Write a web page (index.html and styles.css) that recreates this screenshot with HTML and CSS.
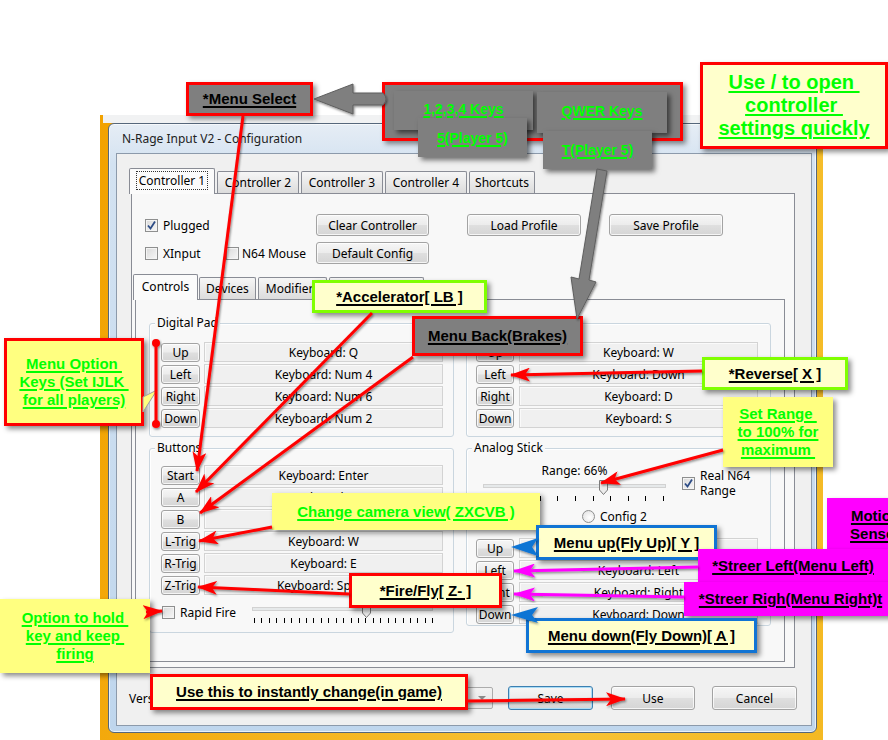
FILE: index.html
```html
<!DOCTYPE html>
<html lang="en">
<head>
    <meta charset="UTF-8">
    <title>N-Rage Input V2 - Configuration</title>
    <link rel="stylesheet" href="styles.css">
</head>
<body>
<div class="desk">
    <div class="win">
        <div class="caption">N-Rage Input V2 - Configuration</div>
        <div class="client">
            <div class="tabs">
                <div class="tab on"><span class="focus">Controller 1</span></div>
                <div class="tab">Controller 2</div>
                <div class="tab">Controller 3</div>
                <div class="tab">Controller 4</div>
                <div class="tab w-short">Shortcuts</div>
            </div>
            <div class="panel">
                <div class="top">
                    <div class="checks">
                        <div class="chk-row"><span class="cb"><svg width="11" height="11" viewBox="0 0 11 11"><path d="M2 5.5L4.5 8.5L9 1.5" fill="none" stroke="#2d4c86" stroke-width="1.8"/></svg></span>Plugged</div>
                        <div class="chk-row"><span class="cb"></span><span class="xi">XInput</span><span class="cb cb-m"></span>N64 Mouse</div>
                    </div>
                    <div class="btncol">
                        <div class="btn">Clear Controller</div>
                        <div class="btn">Default Config</div>
                    </div>
                    <div class="btn load">Load Profile</div>
                    <div class="btn savep">Save Profile</div>
                </div>
                <div class="tabs2">
                    <div class="tab on t-ctl">Controls</div>
                    <div class="tab t-dev">Devices</div>
                    <div class="tab t-mod">Modifiers</div>
                    <div class="tab t-pak">Controller Pak</div>
                </div>
                <div class="panel2">
                    <div class="cols">
                        <div class="col">
                            <div class="group g-pad">
                                <div class="legend">Digital Pad</div>
                                <div class="rows">
                                    <div class="row"><div class="btn">Up</div><div class="key">Keyboard: Q</div></div>
                                    <div class="row"><div class="btn">Left</div><div class="key">Keyboard: Num 4</div></div>
                                    <div class="row"><div class="btn">Right</div><div class="key">Keyboard: Num 6</div></div>
                                    <div class="row"><div class="btn">Down</div><div class="key">Keyboard: Num 2</div></div>
                                </div>
                            </div>
                            <div class="group g-btn">
                                <div class="legend">Buttons</div>
                                <div class="rows">
                                    <div class="row"><div class="btn">Start</div><div class="key">Keyboard: Enter</div></div>
                                    <div class="row"><div class="btn">A</div><div class="key">Keyboard: X</div></div>
                                    <div class="row"><div class="btn">B</div><div class="key">Keyboard: C</div></div>
                                    <div class="row"><div class="btn">L-Trig</div><div class="key">Keyboard: W</div></div>
                                    <div class="row"><div class="btn">R-Trig</div><div class="key">Keyboard: E</div></div>
                                    <div class="row"><div class="btn">Z-Trig</div><div class="key">Keyboard: Space</div></div>
                                </div>
                                <div class="rapid">
                                    <span class="cb"></span><span class="rapid-lbl">Rapid Fire</span>
                                    <div class="slider">
                                        <div class="trk"><svg class="thumb th-rapid" width="9" height="15" viewBox="0 0 9 15"><path d="M.5 .5H8.5V10L4.5 14.5L.5 10Z" fill="#ececec" stroke="#7b7b7b"/></svg></div>
                                        <div class="ticks t-rapid"></div>
                                    </div>
                                </div>
                            </div>
                        </div>
                        <div class="col">
                            <div class="group g-pad">
                                <div class="legend">C Buttons</div>
                                <div class="rows r">
                                    <div class="row"><div class="btn">Up</div><div class="key">Keyboard: W</div></div>
                                    <div class="row"><div class="btn">Left</div><div class="key">Keyboard: Down</div></div>
                                    <div class="row"><div class="btn">Right</div><div class="key">Keyboard: D</div></div>
                                    <div class="row"><div class="btn">Down</div><div class="key">Keyboard: S</div></div>
                                </div>
                            </div>
                            <div class="group g-ana">
                                <div class="legend">Analog Stick</div>
                                <div class="ana">
                                    <div class="rangebox">
                                        <div class="rlbl">Range: 66%</div>
                                        <div class="trk trk2"><svg class="thumb th-range" width="9" height="15" viewBox="0 0 9 15"><path d="M.5 .5H8.5V10L4.5 14.5L.5 10Z" fill="#ececec" stroke="#7b7b7b"/></svg></div>
                                        <div class="ticks t-range"></div>
                                    </div>
                                    <div class="real">
                                        <span class="cb"><svg width="11" height="11" viewBox="0 0 11 11"><path d="M2 5.5L4.5 8.5L9 1.5" fill="none" stroke="#2d4c86" stroke-width="1.8"/></svg></span>
                                        <span class="real-lbl">Real N64<br>Range</span>
                                    </div>
                                </div>
                                <div class="radios">
                                    <div class="radio r1"><span class="rb"></span>Config 1</div>
                                    <div class="radio"><span class="rb"></span>Config 2</div>
                                </div>
                                <div class="rows r ana-rows">
                                    <div class="row"><div class="btn">Up</div><div class="key">Keyboard: Up</div></div>
                                    <div class="row"><div class="btn">Left</div><div class="key">Keyboard: Left</div></div>
                                    <div class="row"><div class="btn">Right</div><div class="key">Keyboard: Right</div></div>
                                    <div class="row"><div class="btn">Down</div><div class="key">Keyboard: Down</div></div>
                                </div>
                            </div>
                        </div>
                    </div>
                </div>
            </div>
            <div class="bottom">
                <div class="ver">Version:</div>
                <div class="combo"><span>1.83</span><span class="arrow"></span></div>
                <div class="btn save">Save</div>
                <div class="btn use">Use</div>
                <div class="btn cancel">Cancel</div>
            </div>
        </div>
    </div>
</div>

<!-- annotations -->
<div class="note gray n-select"><u>*Menu Select</u></div>
<div class="note gray n-keys"></div>
<div class="note gray sm n-k1"><u>1,2,3,4 Keys</u></div>
<div class="note gray sm n-k5"><u>5(Player 5)</u></div>
<div class="note gray sm n-kq"><u>QWER Keys</u></div>
<div class="note gray sm n-kt"><u>T(Player 5)</u></div>
<div class="note pale red-b big n-open"><u>Use / to open&nbsp;<br>controller&nbsp;<br>settings quickly</u></div>
<div class="note pale green-b n-accel"><u>*Accelerator[ LB ]</u></div>
<div class="note gray n-back"><u>Menu Back(Brakes)</u></div>
<div class="note pale green-b n-rev"><u>*Reverse[ X ]</u></div>
<div class="note yel red-b grn n-opt"><u>Menu Option&nbsp;<br>Keys (Set IJLK&nbsp;<br>for all players)</u></div>
<div class="note yel grn n-range"><u>Set Range&nbsp;<br>to 100% for<br>maximum&nbsp;</u></div>
<div class="note yel grn n-cam"><u>Change camera view( ZXCVB )</u></div>
<div class="note pale red-b n-fire"><u>*Fire/Fly[ Z- ]</u></div>
<div class="note yel grn n-hold"><u>Option to hold&nbsp;<br>key and keep&nbsp;<br>firing</u></div>
<div class="note pale red-b n-use"><u>Use this to instantly change(in game)</u></div>
<div class="note pale blue-b n-up"><u>Menu up(Fly Up)[ Y ]</u></div>
<div class="note mag n-mot"><u>Motion<br>Sensor</u></div>
<div class="note mag n-sl"><u>*Streer Left(Menu Left)</u></div>
<div class="note mag n-sr"><u>*Streer Righ(Menu Right)t</u></div>
<div class="note pale blue-b n-down"><u>Menu down(Fly Down)[ A ]</u></div>

<svg class="marks" width="888" height="740" viewBox="0 0 888 740">
    <defs>
        <filter id="sh" x="-20%" y="-20%" width="140%" height="140%"><feDropShadow dx="1" dy="1.5" stdDeviation="1" flood-opacity=".45"/></filter>
        <marker id="hr" viewBox="0 0 20 14" refX="19" refY="7" markerWidth="20" markerHeight="14" markerUnits="userSpaceOnUse" orient="auto"><path d="M0 0L20 7L0 14L5 7z" fill="#f00"/></marker>
        <marker id="hm" viewBox="0 0 22 14" refX="21" refY="7" markerWidth="22" markerHeight="14" markerUnits="userSpaceOnUse" orient="auto"><path d="M0 0L22 7L0 14L5 7z" fill="#f0f"/></marker>
    </defs>
    <g filter="url(#sh)">
        <path class="garrow" d="M314 99L353 84V93H383Q389 99 383 105H353V114Z"/>
        <path class="garrow" d="M597 169L607 171L589 280L596 282L577 319L571 277L579 279Z"/>
    </g>
    <g class="red" filter="url(#sh)">
        <line x1="243" y1="116" x2="197" y2="471"/>
        <line x1="372" y1="313" x2="196" y2="492"/>
        <line x1="413" y1="357" x2="200" y2="513"/>
        <line x1="272" y1="527" x2="199" y2="541"/>
        <line x1="349" y1="594" x2="198" y2="587"/>
        <line x1="702" y1="371" x2="511" y2="375"/>
        <line x1="723" y1="450" x2="601" y2="483"/>
        <line x1="146" y1="612" x2="162" y2="611"/>
        <line x1="467" y1="701" x2="625" y2="699"/>
    </g>
    <polygon class="tail" points="143,397 157,390 143,412"/>
    <g class="brk" filter="url(#sh)">
        <line x1="156" y1="343" x2="156" y2="424"/>
        <circle cx="156" cy="343" r="4"/>
        <circle cx="156" cy="424" r="4"/>
    </g>
    <g class="mg" filter="url(#sh)">
        <line x1="698" y1="567" x2="514" y2="571"/>
        <line x1="684" y1="597" x2="514" y2="594"/>
    </g>
    <g class="bl" filter="url(#sh)">
        <polygon points="511,547 538,538 532,547 538,556"/>
        <polygon points="511,615 538,607 532,615 538,623"/>
    </g>
</svg>
</body>
</html>
```

FILE: styles.css
```css
*{
    box-sizing: border-box;
}
body{
    margin: 0;
    width: 888px;
    height: 740px;
    overflow: hidden;
    position: relative;
    background: #fff;
    font-family: "Noto Sans", "Open Sans", sans-serif;
    font-size: 12px;
    color: #000;
}
.desk{
    margin: 115px 0 0 100px;
    width: 723px;
    height: 625px;
    padding: 8px 6px 7px 8px;
    background:
        linear-gradient(#f1f2f3, #f1f2f3) 3px 0 / 720px 8px no-repeat,
        linear-gradient(100deg, #f2a200, #f5b41e 35%, #f7c234 70%, #f4b923);
}
.win{
    width: 709px;
    height: 610px;
    border: 1px solid #56677b;
    border-radius: 6px;
    background: linear-gradient(#e6edf5, #d3e2f1 40px, #bfd6ed);
    box-shadow: inset 0 0 0 1px rgba(255,255,255,.65);
}
.caption{
    height: 29px;
    line-height: 29px;
    padding-left: 13px;
    color: #222;
    white-space: nowrap;
}
.client{
    margin-left: 7px;
    width: 696px;
    height: 573px;
    border: 1px solid #8c9aab;
    background: #f0f0f0;
    padding: 14px 0 0 12px;
}

/* tabs */
.tabs, .tabs2{
    display: flex;
    align-items: flex-end;
    height: 25px;
}
.tab{
    width: 82px;
    height: 22px;
    margin-right: 2px;
    border: 1px solid #898c95;
    border-bottom: 0;
    border-radius: 2px 2px 0 0;
    background: linear-gradient(#f6f6f6, #e9e9e9 50%, #dcdcdc);
    text-align: center;
    line-height: 21px;
    white-space: nowrap;
    overflow: hidden;
}
.tab.on{
    width: 86px;
    height: 26px;
    margin-bottom: -1px;
    line-height: 24px;
    background: #fbfbfb;
    position: relative;
    z-index: 1;
}
.focus{
    outline: 1px dotted #333;
    padding: 0 2px;
}
.w-short{
    width: 66px;
}
.panel{
    margin-left: 2px;
    width: 664px;
    height: 475px;
    border: 1px solid #898c95;
    background: #f8f8f8;
    padding-top: 20px;
}
.top{
    display: flex;
    height: 50px;
    padding-left: 13px;
}
.checks{
    width: 171px;
}
.chk-row{
    display: flex;
    align-items: center;
    height: 22px;
}
.chk-row + .chk-row{
    margin-top: 6px;
}
.cb{
    flex: none;
    width: 13px;
    height: 13px;
    margin-right: 5px;
    border: 1px solid #8e8f8f;
    background: linear-gradient(135deg, #d9d9d9, #f7f7f7);
    box-shadow: inset 0 0 0 1px #f4f4f4;
    display: flex;
    align-items: center;
    justify-content: center;
}
.xi{
    width: 63px;
}
.cb-m{
    margin-right: 3px;
}
.btn{
    height: 22px;
    border: 1px solid #a3a3a3;
    border-radius: 3px;
    background: linear-gradient(#f6f6f6, #ececec 48%, #dfdfdf 52%, #d5d5d5);
    box-shadow: inset 0 0 0 1px rgba(255,255,255,.75);
    display: flex;
    align-items: center;
    justify-content: center;
    white-space: nowrap;
    overflow: hidden;
}
.btncol{
    width: 113px;
    display: flex;
    flex-direction: column;
    gap: 6px;
}
.load{
    width: 114px;
    margin-left: 38px;
}
.savep{
    width: 114px;
    margin-left: 28px;
}
.tabs2{
    margin: 10px 0 0 1px;
}
.tabs2 .tab.on{
    width: 65px;
}
.t-ctl{
    margin-right: 1px !important;
}
.t-dev{
    width: 57px;
}
.t-mod{
    width: 69px;
}
.t-pak{
    width: 95px;
}
.panel2{
    margin-left: 3px;
    width: 650px;
    height: 363px;
    border: 1px solid #898c95;
    background: #f8f8f8;
}
.cols{
    display: flex;
    gap: 12px;
    padding: 23px 0 0 13px;
}
.col{
    width: 305px;
    display: flex;
    flex-direction: column;
    gap: 11px;
}
.group{
    border: 1px solid #cad6df;
    border-radius: 3px;
    box-shadow: inset 1px 1px 0 #fff;
}
.g-pad{
    height: 114px;
}
.g-btn{
    height: 185px;
}
.g-ana{
    height: 178px;
}
.legend{
    width: fit-content;
    height: 16px;
    line-height: 16px;
    margin: -9px 0 0 5px;
    padding: 0 2px;
    background: #f8f8f8;
}
.rows{
    margin-top: 10px;
    padding-left: 11px;
}
.g-btn .rows{
    margin-top: 8px;
}
.row{
    display: flex;
    align-items: center;
    height: 22px;
}
.row .btn{
    width: 39px;
    height: 19px;
    margin-right: 4px;
}
.rows.r{
    padding-left: 9px;
}
.rows.r .btn{
    width: 38px;
    margin-right: 5px;
}
.key{
    width: 239px;
    height: 20px;
    border: 1px solid #d3d3d3;
    background: #f0f0f0;
    box-shadow: inset 1px 1px 0 #fafafa;
    display: flex;
    align-items: center;
    justify-content: center;
    white-space: nowrap;
    overflow: hidden;
}

/* sliders */
.rapid{
    display: flex;
    align-items: center;
    height: 22px;
    margin-top: 5px;
    padding-left: 12px;
}
.rapid-lbl{
    width: 72px;
}
.slider{
    width: 181px;
    display: flex;
    flex-direction: column;
}
.trk{
    height: 4px;
    margin-top: 6px;
    border: 1px solid #d2d2d2;
    background: #e6e9ea;
    position: relative;
}
.thumb{
    position: absolute;
    top: -5px;
}
.th-rapid{
    left: 109px;
}
.th-range{
    left: 115px;
}
.ticks{
    height: 5px;
}
.t-rapid{
    margin: 7px 0 0 2px;
    width: 179px;
    background: repeating-linear-gradient(90deg, #000 0, #000 1px, transparent 1px, transparent 7.43px);
}
.ana{
    display: flex;
    margin-top: 7px;
}
.rangebox{
    width: 183px;
    margin-left: 16px;
}
.rlbl{
    height: 16px;
    line-height: 16px;
    text-align: center;
}
.trk2{
    margin-top: 5px;
}
.t-range{
    margin: 8px 0 0 4px;
    width: 177px;
    background: repeating-linear-gradient(90deg, #000 0, #000 1px, transparent 1px, transparent 17.6px);
}
.real{
    display: flex;
    align-items: center;
    margin: 5px 0 0 16px;
    height: 30px;
}
.real-lbl{
    line-height: 15px;
}
.radios{
    display: flex;
    align-items: center;
    height: 16px;
    margin: 7px 0 0 8px;
}
.radio{
    display: flex;
    align-items: center;
}
.r1{
    width: 107px;
}
.rb{
    width: 13px;
    height: 13px;
    margin-right: 5px;
    border-radius: 50%;
    border: 1px solid #8e8f8f;
    background: radial-gradient(circle at 60% 60%, #fff, #dedede);
}
.ana-rows{
    margin-top: 13px;
}

/* bottom buttons */
.bottom{
    display: flex;
    align-items: center;
    height: 24px;
    margin-top: 18px;
}
.ver{
    width: 201px;
}
.combo{
    width: 163px;
    height: 22px;
    border: 1px solid #acacac;
    border-radius: 2px;
    background: linear-gradient(#f2f2f2, #e5e5e5);
    display: flex;
    align-items: center;
    justify-content: space-between;
    padding: 0 6px;
}
.arrow{
    width: 0;
    height: 0;
    border-left: 4px solid transparent;
    border-right: 4px solid transparent;
    border-top: 4px solid #8a8a8a;
}
.bottom .btn{
    height: 24px;
}
.save{
    width: 85px;
    margin-left: 15px;
    border-color: #3c7fb1 !important;
    box-shadow: inset 0 0 0 1px #a9dcf5 !important;
}
.use{
    width: 84px;
    margin-left: 18px;
}
.cancel{
    width: 85px;
    margin-left: 17px;
}

/* annotation callouts */
.note{
    position: absolute;
    display: flex;
    align-items: center;
    justify-content: center;
    text-align: center;
    font: bold 15px/18px "Liberation Sans", Arial, sans-serif;
    color: #000;
    white-space: nowrap;
    box-shadow: 3px 3px 5px rgba(0,0,0,.45);
}
.note u{
    text-decoration-thickness: 1.5px;
    text-underline-offset: 2px;
}
.gray{
    background: #7f7f7f;
    border: 3px solid #f00;
}
.sm{
    border: 0;
    font-size: 14px;
    color: #00ff00;
    box-shadow: 3px 3px 5px rgba(0,0,0,.55);
}
.pale{
    background: #ffffcc;
}
.yel{
    background: #ffff80;
}
.mag{
    background: #ff00ff;
}
.grn{
    color: #00ff00;
}
.red-b{
    border: 3px solid #f00;
}
.green-b{
    border: 3px solid #80ff00;
}
.blue-b{
    border: 3px solid #1174d4;
}
.big{
    font-size: 20px;
    line-height: 23px;
    color: #00ff00;
}
.n-select{ left: 186px; top: 82px; width: 127px; height: 34px; }
.n-keys{ left: 382px; top: 82px; width: 301px; height: 59px; }
.n-k1{ left: 394px; top: 91px; width: 139px; height: 39px; padding-bottom: 4px; }
.n-k5{ left: 418px; top: 118px; width: 109px; height: 39px; }
.n-kq{ left: 537px; top: 92px; width: 130px; height: 41px; padding-bottom: 4px; }
.n-kt{ left: 543px; top: 131px; width: 109px; height: 38px; }
.n-open{ left: 700px; top: 62px; width: 188px; height: 87px; }
.n-accel{ left: 312px; top: 280px; width: 175px; height: 33px; }
.n-back{ left: 412px; top: 316px; width: 171px; height: 40px; }
.n-rev{ left: 702px; top: 357px; width: 146px; height: 33px; }
.n-opt{ left: 4px; top: 338px; width: 140px; height: 88px; }
.n-range{ left: 723px; top: 397px; width: 110px; height: 70px; }
.n-cam{ left: 272px; top: 493px; width: 268px; height: 37px; }
.n-fire{ left: 349px; top: 573px; width: 153px; height: 35px; }
.n-hold{ left: 0; top: 599px; width: 150px; height: 74px; }
.n-use{ left: 150px; top: 674px; width: 318px; height: 36px; }
.n-up{ left: 536px; top: 525px; width: 181px; height: 35px; }
.n-mot{ left: 827px; top: 498px; width: 97px; height: 54px; }
.n-sl{ left: 698px; top: 549px; width: 190px; height: 34px; }
.n-sr{ left: 684px; top: 582px; width: 213px; height: 34px; }
.n-down{ left: 526px; top: 618px; width: 231px; height: 35px; }

/* arrows layer */
.marks{
    position: absolute;
    left: 0;
    top: 0;
    pointer-events: none;
}
.garrow{
    fill: #7f7f7f;
    stroke: #5f5f5f;
    stroke-width: 1;
}
.red line{
    stroke: #f00;
    stroke-width: 3;
    marker-end: url(#hr);
}
.tail{
    fill: #ffff80;
    stroke: #a0a0a0;
}
.brk line{
    stroke: #f00;
    stroke-width: 3;
}
.brk circle{
    fill: #f00;
}
.mg line{
    stroke: #f0f;
    stroke-width: 3;
    marker-end: url(#hm);
}
.bl polygon{
    fill: #1174d4;
}
```
